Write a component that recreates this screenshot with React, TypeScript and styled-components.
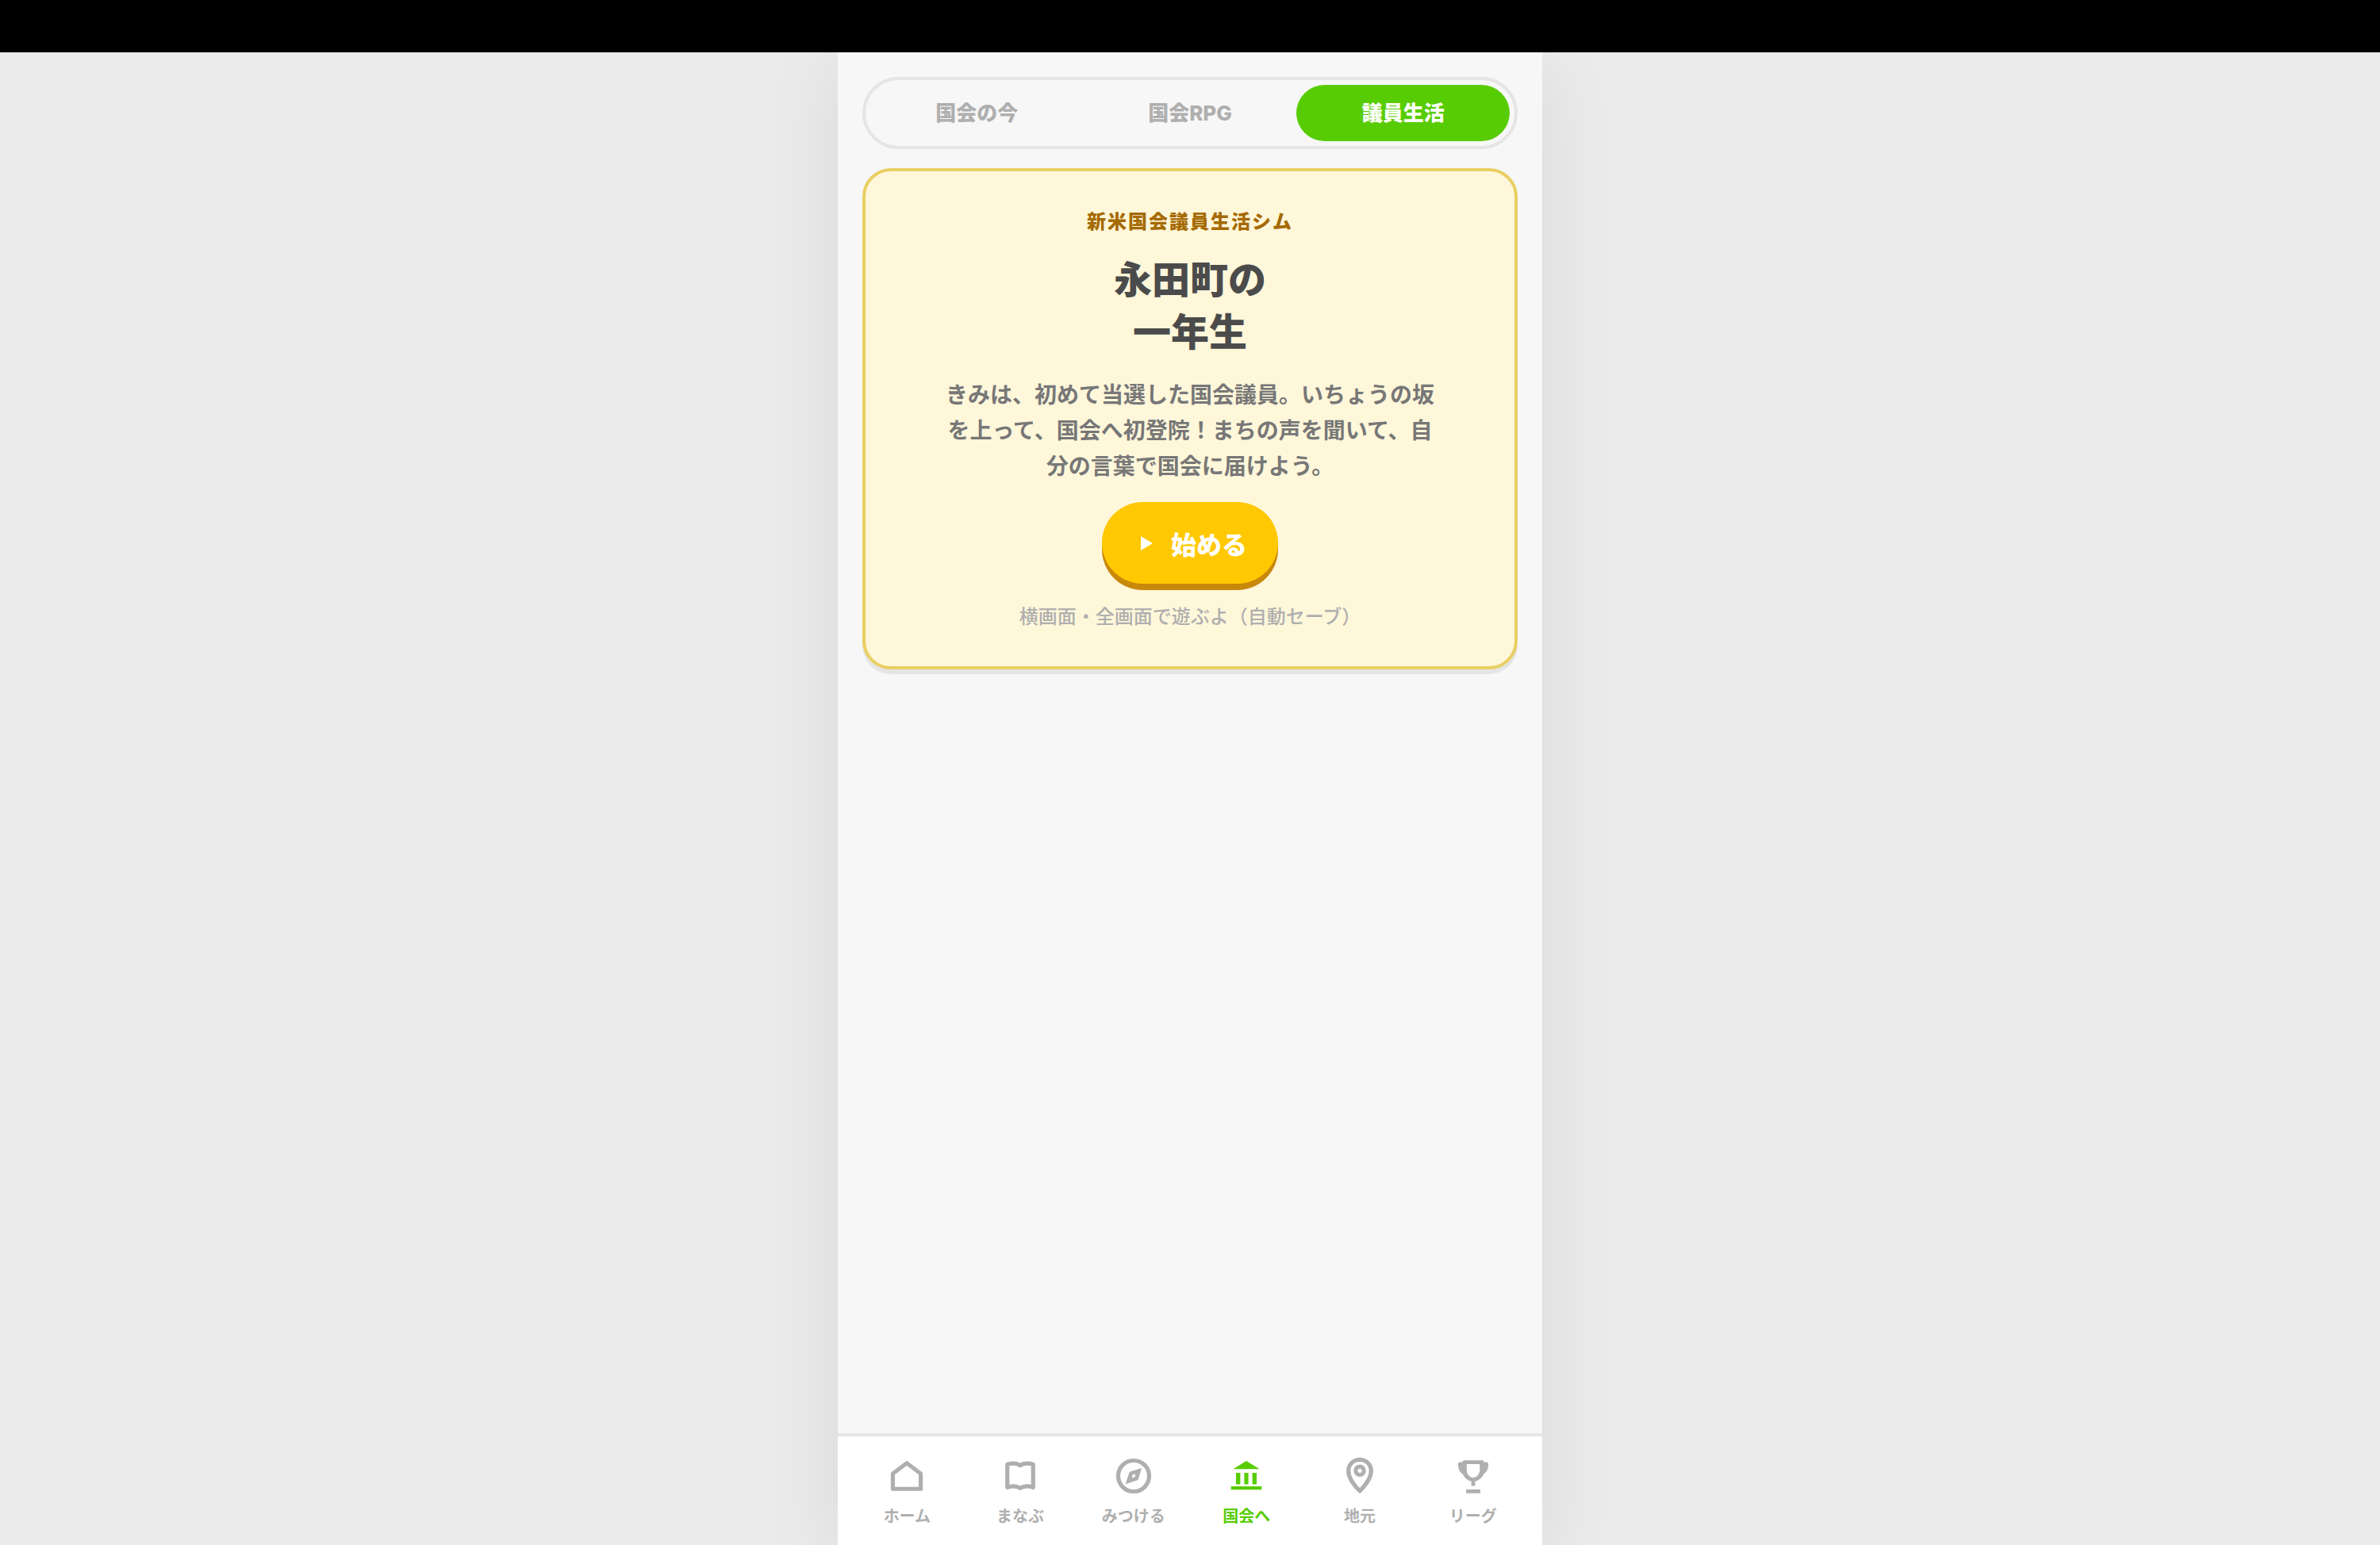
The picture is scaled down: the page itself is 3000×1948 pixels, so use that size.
import React, { useState } from "react";
import styled, { createGlobalStyle } from "styled-components";

const GlobalStyle = createGlobalStyle`
  *, *::before, *::after { box-sizing: border-box; }
  body {
    margin: 0;
    background: #ebebeb;
    color: #4b4b4b;
    font-family: "Noto Sans CJK JP", "Noto Sans", sans-serif;
  }
  button { font: inherit; border: 0; cursor: pointer; }
`;

const Page = styled.div`
  display: flex;
  flex-direction: column;
  min-height: 100vh;
`;

const StatusBar = styled.div`
  position: relative;
  z-index: 1;
  height: 66px;
  background: #000;
`;

const Shell = styled.div`
  flex: 1;
  display: flex;
  flex-direction: column;
  width: 100%;
  max-width: 888px;
  margin: 0 auto;
  background: #f7f7f7;
  box-shadow: 0 16px 96px rgba(0, 0, 0, 0.08);
`;

const Main = styled.main`
  flex: 1;
  display: flex;
  flex-direction: column;
  gap: 24px;
  padding: 31px;
`;

const Tabs = styled.div`
  display: flex;
  padding: 6px;
  border: 4px solid #e5e5e5;
  border-radius: 46px;
`;

const Tab = styled.button<{ $active: boolean }>`
  flex: 1;
  height: 71px;
  padding: 0;
  border-radius: 36px;
  background: ${(p) => (p.$active ? "#58cc02" : "transparent")};
  color: ${(p) => (p.$active ? "#fff" : "#afafaf")};
  font-family: Inter, "Noto Sans CJK JP", sans-serif;
  font-size: 26px;
  font-weight: 800;
  line-height: 36px;
`;

const Card = styled.section`
  display: flex;
  flex-direction: column;
  align-items: center;
  padding: 44px 32px 46px;
  border: 4px solid #e9cf63;
  border-radius: 36px;
  background: #fff7da;
  box-shadow: 0 6px 0 #e5e5e5;
  text-align: center;
`;

const Eyebrow = styled.p`
  margin: 0 0 20px;
  color: #a56a00;
  font-size: 24px;
  font-weight: 800;
  line-height: 36px;
  letter-spacing: 2px;
`;

const Title = styled.h1`
  margin: 0 0 26px;
  font-size: 48px;
  font-weight: 900;
  line-height: 66px;
`;

const Lead = styled.p`
  max-width: 630px;
  margin: 0 0 24px;
  color: #777;
  font-size: 28px;
  font-weight: 600;
  line-height: 45px;
`;

const StartButton = styled.button`
  display: flex;
  align-items: center;
  gap: 22px;
  height: 103px;
  margin-bottom: 22px;
  padding: 0 39px 0 48px;
  border-radius: 52px;
  background: #ffc800;
  box-shadow: 0 8px 0 #c8880a;
  color: #fff;
  font-size: 32px;
  font-weight: 900;
  line-height: 48px;
`;

const Note = styled.p`
  margin: 0;
  color: #afafaf;
  font-size: 24px;
  font-weight: 500;
  line-height: 36px;
`;

const BottomNav = styled.nav`
  display: flex;
  height: 141px;
  padding: 24px 16px 0;
  border-top: 4px solid #e5e5e5;
  background: #fff;
`;

const NavItem = styled.a<{ $active: boolean }>`
  flex: 1;
  display: flex;
  flex-direction: column;
  align-items: center;
  gap: 9px;
  color: ${(p) => (p.$active ? "#58cc02" : "#afafaf")};
  font-size: 20px;
  font-weight: 700;
  line-height: 30px;
  text-decoration: none;
`;

const Glyph = styled.svg`
  width: 52px;
  height: 52px;
  fill: none;
  stroke: none;
`;

const line = {
  stroke: "currentColor",
  strokeWidth: 2.4,
  strokeLinejoin: "round" as const,
};

const navItems = [
  {
    label: "ホーム",
    icon: <path {...line} d="M12 4.5 3.9 10.6V19.5H20.1V10.6Z" />,
  },
  {
    label: "まなぶ",
    icon: (
      <path
        {...line}
        d="M12 5.9C10 4.4 7 4.5 4.5 5.2V18.6C7 17.8 10 17.8 12 19.1C14 17.8 17 17.8 19.5 18.6V5.2C17 4.5 14 4.4 12 5.9Z"
      />
    ),
  },
  {
    label: "みつける",
    icon: (
      <>
        <circle {...line} cx="12" cy="12" r="9" />
        <path
          fill="currentColor"
          fillRule="evenodd"
          d="M16.7 7.4 14.5 14.3 7.2 16.7 9.6 9.6ZM12.8 11.2C12.3 10.8 11.6 11.1 11.3 11.6C11 12.2 11 12.8 11.3 13C11.8 13.2 12.5 12.9 12.8 12.4C13.1 11.9 13.1 11.5 12.8 11.2Z"
        />
      </>
    ),
  },
  {
    label: "国会へ",
    icon: (
      <path
        fill="currentColor"
        d="M12 3.2 19.7 8H4.4ZM6 10.1H8.5V16.9H6ZM10.8 10.1H13.2V16.9H10.8ZM15.5 10.1H18V16.9H15.5ZM3.1 18H20.9V20H3.1Z"
      />
    ),
  },
  {
    label: "地元",
    icon: (
      <>
        <path
          {...line}
          d="M12 20.7C8.6 17.3 5.4 12.9 5.4 9.1C5.4 5.3 8.4 2.5 12 2.5S18.6 5.3 18.6 9.1C18.6 12.9 15.4 17.3 12 20.7Z"
        />
        <circle {...line} cx="12" cy="8.9" r="2.4" />
      </>
    ),
  },
  {
    label: "リーグ",
    icon: (
      <path
        fill="currentColor"
        fillRule="evenodd"
        d="M6.4 2.9H17.6Q18 2.9 18.2 3.9H19.7Q20.8 3.9 20.8 5C20.8 7.8 19.9 10.1 18.1 10.8C17.1 13 15.3 14.6 13.1 15V17.8H10.9V15C8.7 14.6 6.9 13 5.9 10.8C4.1 10.1 3.2 7.8 3.2 5Q3.2 3.9 4.3 3.9H5.8Q6 2.9 6.4 2.9ZM8.2 5.1V8.4C8.2 10.8 9.8 12.9 12 12.9S15.8 10.8 15.8 8.4V5.1ZM7.9 19.8H16.1V22H7.9Z"
      />
    ),
  },
];

const tabs = ["国会の今", "国会RPG", "議員生活"];

export default function App() {
  const [tab, setTab] = useState("議員生活");

  return (
    <>
      <GlobalStyle />
      <Page>
        <StatusBar />
        <Shell>
          <Main>
            <Tabs role="tablist">
              {tabs.map((name) => (
                <Tab
                  key={name}
                  type="button"
                  role="tab"
                  aria-selected={tab === name}
                  $active={tab === name}
                  onClick={() => setTab(name)}
                >
                  {name}
                </Tab>
              ))}
            </Tabs>
            <Card>
              <Eyebrow>新米国会議員生活シム</Eyebrow>
              <Title>
                永田町の
                <br />
                一年生
              </Title>
              <Lead>
                きみは、初めて当選した国会議員。いちょうの坂を上って、国会へ初登院！まちの声を聞いて、自分の言葉で国会に届けよう。
              </Lead>
              <StartButton type="button">
                <svg width="17" height="20" viewBox="0 0 17 20" aria-hidden="true">
                  <path d="M1 1 16 10 1 19Z" fill="#fff" />
                </svg>
                始める
              </StartButton>
              <Note>横画面・全画面で遊ぶよ（自動セーブ）</Note>
            </Card>
          </Main>
          <BottomNav>
            {navItems.map(({ label, icon }) => (
              <NavItem key={label} href="#" $active={label === "国会へ"}>
                <Glyph viewBox="0 0 24 24" aria-hidden="true">
                  {icon}
                </Glyph>
                {label}
              </NavItem>
            ))}
          </BottomNav>
        </Shell>
      </Page>
    </>
  );
}
